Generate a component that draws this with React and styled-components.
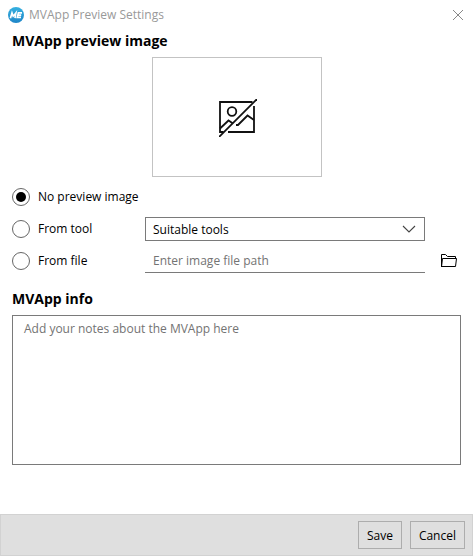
import { useState } from 'react';
import styled, { createGlobalStyle } from 'styled-components';

const App = () => {
  const [source, setSource] = useState('none');
  const [tool, setTool] = useState('suitable');
  const [filePath, setFilePath] = useState('');
  const [notes, setNotes] = useState('');

  const handleSourceChange = (e) => {
    setSource(e.target.value);
  }

  return (
    <>
      <GlobalStyle />
      <Dialog>
        <TitleBar>
          <AppLogo />
          <Title>MVApp Preview Settings</Title>
          <CloseButton type="button" aria-label="Close"><CloseIcon /></CloseButton>
        </TitleBar>

        <Content>
          <SectionHeading>MVApp preview image</SectionHeading>
          <PreviewBox><NoImageIcon /></PreviewBox>

          <SourceList>
            <SourceRow>
              <RadioLabel>
                <Radio name="source" value="none" checked={source === 'none'} onChange={handleSourceChange} />
                No preview image
              </RadioLabel>
            </SourceRow>
            <SourceRow>
              <RadioLabel>
                <Radio name="source" value="tool" checked={source === 'tool'} onChange={handleSourceChange} />
                From tool
              </RadioLabel>
              <SelectWrapper>
                <Select aria-label="Tool" value={tool} onChange={(e) => setTool(e.target.value)}>
                  <option value="suitable">Suitable tools</option>
                </Select>
                <ChevronIcon />
              </SelectWrapper>
            </SourceRow>
            <SourceRow>
              <RadioLabel>
                <Radio name="source" value="file" checked={source === 'file'} onChange={handleSourceChange} />
                From file
              </RadioLabel>
              <PathInput
                aria-label="Image file path"
                placeholder="Enter image file path"
                value={filePath}
                onChange={(e) => setFilePath(e.target.value)}
              />
              <BrowseButton type="button" aria-label="Browse"><FolderIcon /></BrowseButton>
            </SourceRow>
          </SourceList>

          <SectionHeading as="label" htmlFor="notes">MVApp info</SectionHeading>
          <Notes
            id="notes"
            placeholder="Add your notes about the MVApp here"
            value={notes}
            onChange={(e) => setNotes(e.target.value)}
          />
        </Content>

        <Footer>
          <FooterButton type="button">Save</FooterButton>
          <FooterButton type="button">Cancel</FooterButton>
        </Footer>
      </Dialog>
    </>
  )
}

export default App;

const AppLogo = () => (
  <svg width="16" height="16" viewBox="0 0 16 16" aria-hidden="true">
    <defs>
      <linearGradient id="logoFill" x1="0" y1="0" x2="0" y2="1">
        <stop offset="0" stopColor="#35b0e0" />
        <stop offset="1" stopColor="#1f86c8" />
      </linearGradient>
    </defs>
    <circle cx="8" cy="8" r="8" fill="url(#logoFill)" />
    <g fill="none" stroke="#fff" strokeWidth="1.7">
      <path d="M2.4 11.2 4 6 5.2 9.2 7.9 6 7 11.2" />
      <path d="M14 5.9H10.4L9.3 10.4H13M9.8 8.2H13.2" />
    </g>
  </svg>
)

const CloseIcon = () => (
  <svg width="10" height="10" viewBox="0 0 10 10" fill="none" stroke="#888" aria-hidden="true">
    <path d="M0 0 10 10M10 0 0 10" />
  </svg>
)

const NoImageIcon = () => (
  <svg width="38" height="38" viewBox="0 0 38 38" fill="none" stroke="#111" strokeWidth="1.8" aria-hidden="true">
    <path d="M33.5 3H1V33H4.5M9 33H35V7" />
    <circle cx="13" cy="12.5" r="4.3" />
    <path d="M1 29.5 9.5 21.5 14 24.5" />
    <path d="M17 26H19L28.5 16.5 35 21" />
    <path d="M0 38 38 0" />
  </svg>
)

const FolderIcon = () => (
  <svg width="16" height="14" viewBox="0 0 16 14" fill="none" stroke="#000" aria-hidden="true">
    <path d="M.5 13V.5H4.5L6.5 2.5H14.5V4.5" />
    <path d="M.5 13 1.5 4.5H15.5L14.5 12.5H.5" />
  </svg>
)

const ChevronIcon = () => (
  <Chevron width="14" height="8" viewBox="0 0 14 8" fill="none" stroke="#444" strokeWidth="1.1" aria-hidden="true">
    <path d="M1 1 7 7 13 1" />
  </Chevron>
)

const GlobalStyle = createGlobalStyle`
  *, *::before, *::after {
    box-sizing: border-box;
  }

  body {
    margin: 0;
    background: #fff;
  }

  body, button, input, select, textarea {
    font-family: "Open Sans", "Noto Sans", sans-serif;
    font-size: 12px;
    line-height: 16px;
    color: #000;
  }
`

const Dialog = styled.main`
  display: flex;
  flex-direction: column;
  min-height: 100vh;
`

const TitleBar = styled.header`
  display: flex;
  align-items: center;
  gap: 5px;
  height: 30px;
  padding: 0 8px;
`

const Title = styled.h1`
  flex: 1;
  margin: 0;
  font-size: 12px;
  font-weight: 400;
  color: #999;
`

const CloseButton = styled.button`
  display: flex;
  padding: 2px;
  border: 0;
  background: none;
`

const Content = styled.div`
  display: flex;
  flex-direction: column;
  padding: 0 12px;
`

const SectionHeading = styled.h2`
  margin: 0;
  font-size: 14px;
  font-weight: 700;
  line-height: 22px;
`

const PreviewBox = styled.div`
  display: flex;
  align-items: center;
  justify-content: center;
  align-self: center;
  width: 170px;
  height: 120px;
  margin-top: 5px;
  padding: 2px 0 0 2px;
  border: 1px solid #c3c3c3;
`

const SourceList = styled.div`
  margin: 4px 0 11px;
`

const SourceRow = styled.div`
  display: grid;
  grid-template-columns: 121px 1fr 24px;
  align-items: center;
  column-gap: 12px;
  height: 32px;
`

const RadioLabel = styled.label`
  display: flex;
  align-items: center;
  gap: 8px;
  line-height: 18px;
  white-space: nowrap;
`

const Radio = styled.input.attrs({ type: 'radio' })`
  appearance: none;
  display: grid;
  place-items: center;
  flex: none;
  width: 18px;
  height: 18px;
  margin: 0;
  border: 1px solid #666;
  border-radius: 50%;

  &:checked::before {
    content: '';
    width: 10px;
    height: 10px;
    border-radius: 50%;
    background: #000;
  }
`

const SelectWrapper = styled.div`
  position: relative;
`

const Select = styled.select`
  appearance: none;
  display: block;
  width: 100%;
  height: 24px;
  padding: 1px 28px 0 7px;
  border: 1px solid #7a7a7a;
  border-radius: 0;
  background: #fff;
`

const Chevron = styled.svg`
  position: absolute;
  top: 8px;
  right: 9px;
  pointer-events: none;
`

const PathInput = styled.input`
  width: 100%;
  height: 24px;
  padding: 0 8px;
  border: 0;
  border-bottom: 1px solid #7a7a7a;
  background: none;

  &::placeholder {
    color: #737373;
  }
`

const BrowseButton = styled.button`
  display: flex;
  justify-content: center;
  padding: 4px 0;
  border: 0;
  background: none;
`

const Notes = styled.textarea`
  height: 150px;
  margin-top: 5px;
  padding: 5px 11px;
  border: 1px solid #7a7a7a;
  resize: none;

  &::placeholder {
    color: #737373;
  }
`

const Footer = styled.footer`
  display: flex;
  justify-content: flex-end;
  gap: 8px;
  margin-top: auto;
  padding: 6px 7px;
  border: 1px solid #d2d2d2;
  background: #dfdfdf;
`

const FooterButton = styled.button`
  height: 28px;
  padding: 1px 8px 0;
  border: 1px solid #adadad;
  background: #dfdfdf;
`
